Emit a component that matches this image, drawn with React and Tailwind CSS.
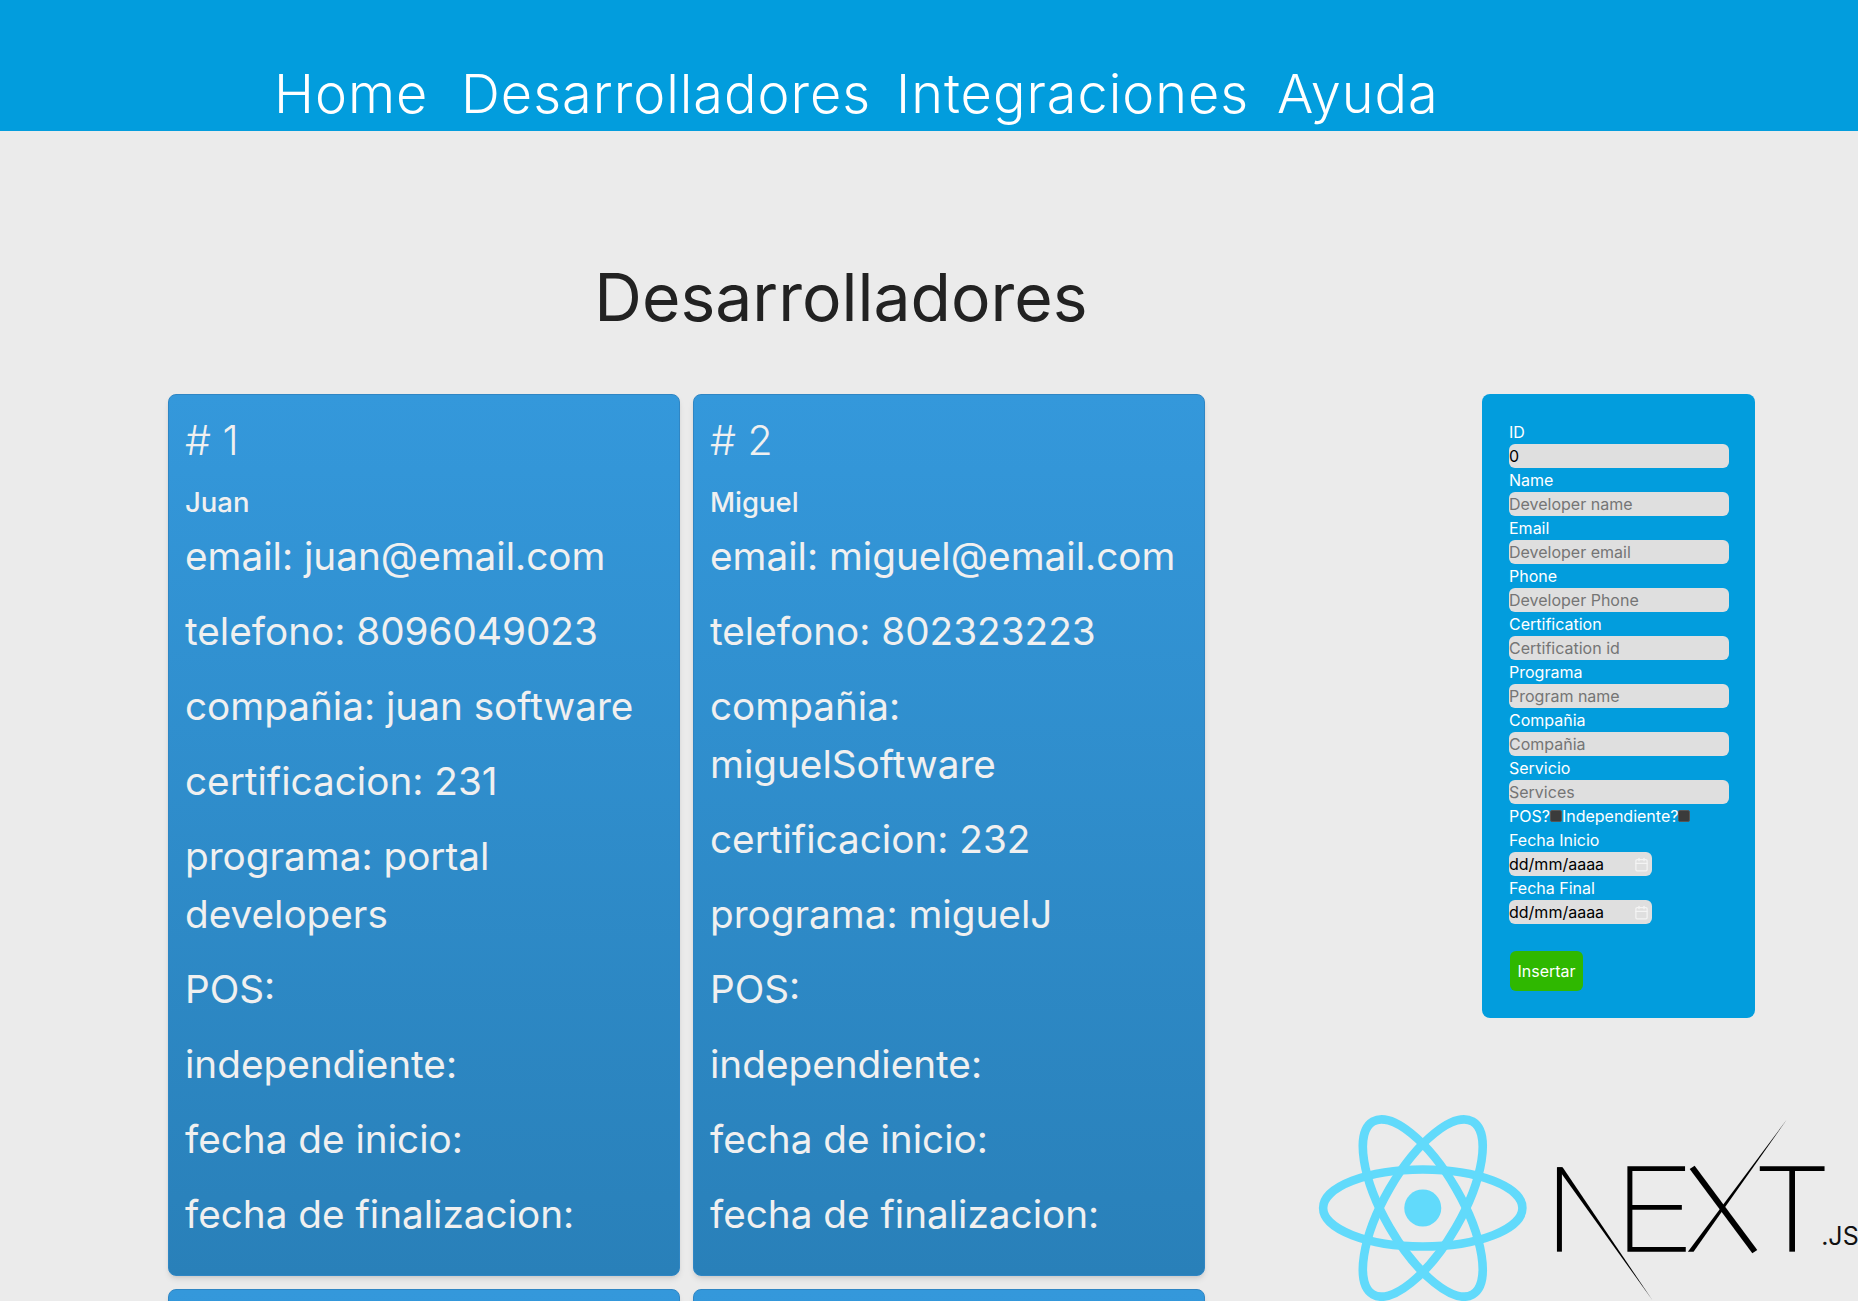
import React from 'react';
import { Calendar } from 'lucide-react';

const developers = [
  { id: 1, name: 'Juan', email: 'juan@email.com', phone: '8096049023', company: 'juan software', cert: '231', program: 'portal developers' },
  { id: 2, name: 'Miguel', email: 'miguel@email.com', phone: '802323223', company: 'miguelSoftware', cert: '232', program: 'miguelJ' },
  { id: 3, name: 'Pedro', email: 'pedro@email.com', phone: '8091112233', company: 'pedro software', cert: '233', program: 'portal' },
  { id: 4, name: 'Ana', email: 'ana@email.com', phone: '8094445566', company: 'ana software', cert: '234', program: 'portal' },
];

const fields = [
  { label: 'Name', placeholder: 'Developer name' },
  { label: 'Email', placeholder: 'Developer email' },
  { label: 'Phone', placeholder: 'Developer Phone' },
  { label: 'Certification', placeholder: 'Certification id' },
  { label: 'Programa', placeholder: 'Program name' },
  { label: 'Compañia', placeholder: 'Compañia' },
  { label: 'Servicio', placeholder: 'Services' },
];

const inputClass = 'block w-[220px] h-6 bg-[#dfdfdf] rounded-[6px] text-base text-black placeholder:text-[#757575] outline-none';

const DeveloperCard = ({ dev }) => (
  <div className="h-[882px] rounded-lg border border-[#2f86c4] bg-gradient-to-b from-[#3498db] to-[#2980b9] px-4 pt-[18px] shadow-md text-[#f0f0f0]">
    <h2 className="text-[41px] font-light leading-[54px]">
      # {dev.id}
    </h2>
    <h3 className="mt-[16px] text-[27.5px] font-medium leading-[38px]">{dev.name}</h3>
    <div className="mt-[6px] text-[38.7px] font-normal leading-[58px]">
      <p className="mb-[17px]">email: {dev.email}</p>
      <p className="mb-[17px]">telefono: {dev.phone}</p>
      <p className="mb-[17px]">compañia: {dev.company}</p>
      <p className="mb-[17px]">certificacion: {dev.cert}</p>
      <p className="mb-[17px]">programa: {dev.program}</p>
      <p className="mb-[17px]">POS:</p>
      <p className="mb-[17px]">independiente:</p>
      <p className="mb-[17px]">fecha de inicio:</p>
      <p>fecha de finalizacion:</p>
    </div>
  </div>
);

const DateField = ({ label }) => (
  <>
    <label className="block h-6 leading-6">{label}</label>
    <div className="flex h-6 w-[143px] items-center justify-between rounded-[6px] bg-[#dfdfdf] pr-[3px] text-base text-black">
      <span>dd/mm/aaaa</span>
      <Calendar size={15} className="text-[#f4f4f4]" />
    </div>
  </>
);

const Logos = () => (
  <svg viewBox="0 0 1568 633" preserveAspectRatio="none" className="block h-[211px] w-[558px]" role="img" aria-label="React y Next.js">
    <g transform="translate(345 354) scale(1 1.07)" fill="none" stroke="#61dafb" strokeWidth="24">
      <ellipse rx="280" ry="108" />
      <ellipse rx="280" ry="108" transform="rotate(60)" />
      <ellipse rx="280" ry="108" transform="rotate(-60)" />
      <ellipse rx="52" ry="52" fill="#61dafb" stroke="none" />
    </g>
    <g stroke="#000" fill="none" strokeWidth="14">
      <path d="M729 485V232" />
      <path d="M1082 236H927V478H1084" />
      <path d="M927 352H1073" />
      <path d="M1102 232L1278 485" strokeWidth="17" />
      <path d="M1292 236H1474" />
      <path d="M1383 236V485" strokeWidth="16" />
    </g>
    <polygon points="722,232 738,232 990,630" fill="#000" />
    <polygon points="1090,485 1106,485 1367,90" fill="#000" />
    <g transform="scale(0.937 1)">
      <text x="1563" y="464" fontFamily="Inter, sans-serif" fontSize="75" fill="#111">.JS</text>
    </g>
  </svg>
);

export default function App() {
  return (
    <div className="h-screen overflow-hidden bg-[#ebebeb] font-['Inter',sans-serif]">
      <nav className="flex h-[131px] items-end gap-[27px] bg-[#029ddd] pb-[6px] pl-[274px] text-[54px] font-light leading-[62px] tracking-[1px] text-white">
        <a className="w-[160px]">Home</a>
        <a className="w-[408px]">Desarrolladores</a>
        <a className="w-[354px]">Integraciones</a>
        <a className="w-[164px]">Ayuda</a>
      </nav>

      <h1 className="mt-[127px] w-[1682px] text-center text-[66px] font-normal leading-[78px] text-[#222]">
        Desarrolladores
      </h1>

      <div className="mt-[58px] flex pl-[168px]">
        <div className="grid w-[1037px] grid-cols-2 gap-[13px]">
          {developers.map((dev) => (
            <DeveloperCard key={dev.id} dev={dev} />
          ))}
        </div>

        <div className="ml-[95px] w-[558px]">
          <form className="ml-[182px] h-[624px] w-[273px] rounded-lg bg-[#029ddd] pl-[27px] pt-[26px] text-base text-white">
            <label className="block h-6 leading-6">ID</label>
            <input className={inputClass} defaultValue="0" />
            {fields.map((field) => (
              <div key={field.label}>
                <label className="block h-6 leading-6">{field.label}</label>
                <input className={inputClass} placeholder={field.placeholder} />
              </div>
            ))}
            <div className="flex h-6 items-center">
              <span>POS?</span>
              <input type="checkbox" className="h-3 w-3 appearance-none rounded-[2px] border border-[#555] bg-[#3b3b3b]" />
              <span>Independiente?</span>
              <input type="checkbox" className="h-3 w-3 appearance-none rounded-[2px] border border-[#555] bg-[#3b3b3b]" />
            </div>
            <DateField label="Fecha Inicio" />
            <DateField label="Fecha Final" />
            <button type="button" className="ml-px mt-[27px] block h-10 w-[73px] rounded-[6px] bg-[#2fb800] text-base text-white">
              Insertar
            </button>
          </form>
          <div className="mt-[72px]">
            <Logos />
          </div>
        </div>
      </div>
    </div>
  );
}
